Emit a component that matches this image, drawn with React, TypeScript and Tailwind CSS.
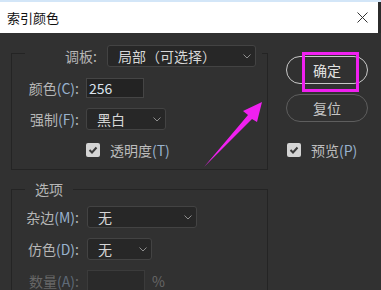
import type { ReactNode } from "react";

const FONT = '"Noto Sans CJK SC", "Noto Sans", sans-serif';

function Chevron() {
  return (
    <svg width="8" height="5" viewBox="0 0 8 5">
      <path d="M0.5 0.5 L4 4 L7.5 0.5" fill="none" stroke="#8e8e8e" strokeWidth="1" />
    </svg>
  );
}

function Select({ value, className }: { value: string; className: string }) {
  return (
    <div
      className={`flex h-[22px] shrink-0 items-center justify-between rounded-[3px] border border-[#434343] bg-[#272727] pl-[10px] pr-[4px] text-[14px] leading-none text-[#d6d6d6] ${className}`}
    >
      <span>{value}</span>
      <Chevron />
    </div>
  );
}

function Check() {
  return (
    <div className="flex h-[14px] w-[14px] shrink-0 items-center justify-center rounded-[2px] bg-[#d4d4d4]">
      <svg width="10" height="8" viewBox="0 0 10 8">
        <path d="M1.5 4 L4 6.5 L8.5 1.5" fill="none" stroke="#3a3a3a" strokeWidth="2" />
      </svg>
    </div>
  );
}

function Label({ text, key2, dim }: { text: string; key2: string; dim?: boolean }) {
  return (
    <span
      className={`w-[67px] shrink-0 text-right text-[14px] leading-none ${dim ? "text-[#676767]" : "text-[#b6b6b6]"}`}
    >
      {text}
      <span className={dim ? "text-[#5f6a78]" : "text-[#98b2ce]"}>({key2})</span>:
    </span>
  );
}

function Row({ children, className = "" }: { children: ReactNode; className?: string }) {
  return <div className={`flex items-center ${className}`}>{children}</div>;
}

export default function App() {
  return (
    <div
      className="relative flex h-[290px] w-[381px] flex-col overflow-hidden bg-[#313131]"
      style={{ fontFamily: FONT }}
    >
      {/* title bar */}
      <div className="flex h-[33px] shrink-0 border-t-2 border-[#d3e6f8] bg-[#2b2b2b]">
        <div className="flex flex-1 items-center justify-between bg-white pl-[7px] pr-[10px]">
          <span className="text-[13px] leading-none text-[#111]">索引颜色</span>
          <svg width="11" height="11" viewBox="0 0 11 11">
            <path d="M0.5 0.5 L10.5 10.5 M10.5 0.5 L0.5 10.5" stroke="#333" strokeWidth="1" />
          </svg>
        </div>
        <div className="w-[3px]" />
      </div>

      {/* body */}
      <div className="flex shrink-0 pl-[11px] pt-[12px]">
        <div className="flex flex-col">
          <fieldset className="w-[257px] border border-[#242424] pb-[12px] pt-[17px]">
            <legend className="ml-[13px] flex h-[16px] items-start pr-[6px]">
              <span className="flex h-[22px] w-[72px] items-center justify-end text-[14px] leading-none text-[#b6b6b6]">
                调板:
              </span>
              <Select value="局部（可选择）" className="ml-[10px] w-[149px]" />
            </legend>
            <Row>
              <Label text="颜色" key2="C" />
              <div className="ml-[7px] flex h-[20px] w-[58px] items-center border border-[#454545] bg-[#232323] pl-[2px] text-[14px] leading-none text-[#dbe3ee]">
                256
              </div>
            </Row>
            <Row className="mt-[10px]">
              <Label text="强制" key2="F" />
              <Select value="黑白" className="ml-[7px] w-[80px]" />
            </Row>
            <Row className="mt-[13px] pl-[74px]">
              <Check />
              <span className="ml-[10px] text-[14px] leading-none text-[#bdbdbd]">
                透明度<span className="text-[#98b2ce]">(T)</span>
              </span>
            </Row>
          </fieldset>

          <fieldset className="mt-[10px] w-[257px] border border-[#242424] pb-[20px] pt-[8px]">
            <legend className="ml-[13px] px-[10px] text-[14px] leading-[18px] text-[#b6b6b6]">选项</legend>
            <Row>
              <Label text="杂边" key2="M" />
              <Select value="无" className="ml-[8px] w-[110px]" />
            </Row>
            <Row className="mt-[10px]">
              <Label text="仿色" key2="D" />
              <Select value="无" className="ml-[8px] w-[65px]" />
            </Row>
            <Row className="mt-[10px]">
              <Label text="数量" key2="A" dim />
              <div className="ml-[8px] h-[21px] w-[58px] border border-[#3b3b3b] bg-[#2a2a2a]" />
              <span className="ml-[7px] text-[14px] leading-none text-[#676767]">%</span>
            </Row>
          </fieldset>
        </div>

        <div className="ml-[18px] flex flex-col pt-[11px]">
          <div className="relative">
            <div className="flex h-[28px] w-[82px] items-center justify-center rounded-full border-[1.5px] border-[#c9c9c9] text-[14px] leading-none text-[#e2e2e2]">
              确定
            </div>
            <div className="absolute left-[16px] top-[-4px] h-[40px] w-[57px] border-[3px] border-[#f020f0]" />
          </div>
          <div className="mt-[10px] flex h-[28px] w-[82px] items-center justify-center rounded-full border-[1.5px] border-[#5e5e5e] text-[14px] leading-none text-[#c6c6c6]">
            复位
          </div>
          <Row className="ml-[1px] mt-[21px]">
            <Check />
            <span className="ml-[10px] text-[14px] leading-none text-[#bdbdbd]">
              预览<span className="text-[#98b2ce]">(P)</span>
            </span>
          </Row>
        </div>
      </div>

      {/* annotation arrow */}
      <svg
        className="pointer-events-none absolute left-0 top-0"
        width="381"
        height="290"
        viewBox="0 0 381 290"
      >
        <polygon
          points="204,167 248,115 243,111 262,102 257,122 252,119"
          fill="#f020f0"
        />
      </svg>
    </div>
  );
}
